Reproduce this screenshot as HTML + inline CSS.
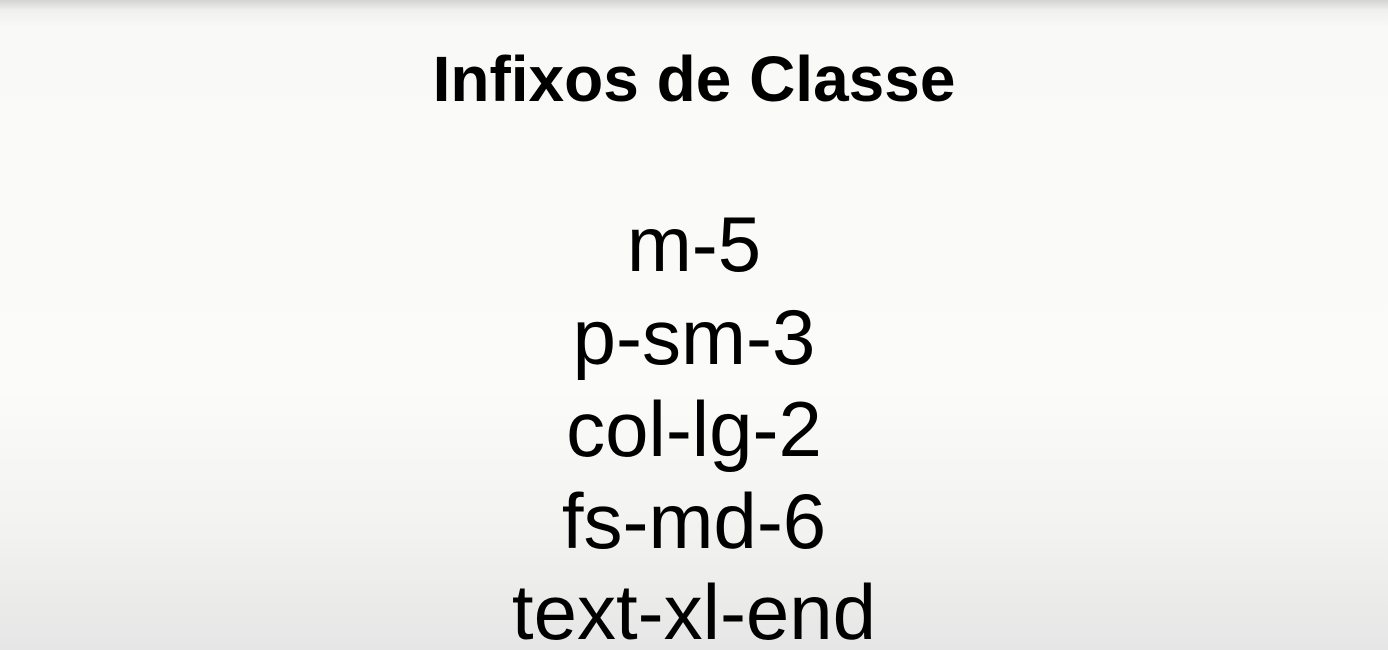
<!DOCTYPE html>
<html><head><meta charset="utf-8"><style>
html,body{margin:0;padding:0;width:1388px;height:650px;overflow:hidden;}
body{position:relative;font-family:"Liberation Sans",sans-serif;color:#000;
background:linear-gradient(to bottom,#d4d4d4 0px,#efefed 10px,#f9f9f7 28px,#fbfbf9 60%,#f2f2f0 82%,#e6e6e6 100%);}
.t{position:absolute;left:0;width:1388px;text-align:center;line-height:1.149;white-space:nowrap;}
.h{font-size:64px;font-weight:bold;top:43px;}
.l{font-size:78px;}
</style></head><body>
<div class="t h">Infixos de Classe</div>
<div class="t l" style="top:200px">m-5</div>
<div class="t l" style="top:293px">p-sm-3</div>
<div class="t l" style="top:385px">col-lg-2</div>
<div class="t l" style="top:477px">fs-md-6</div>
<div class="t l" style="top:568px">text-xl-end</div>
</body></html>
